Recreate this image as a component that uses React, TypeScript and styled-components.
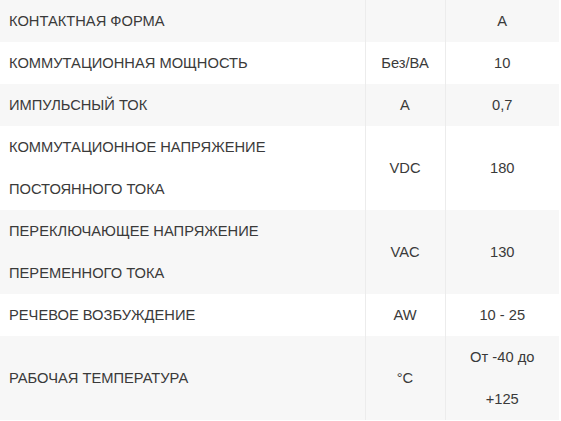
import React from 'react';
import styled, { createGlobalStyle } from 'styled-components';

interface Spec {
  name: string[];
  unit: string;
  value: string[];
}

const specs: Spec[] = [
  { name: ['КОНТАКТНАЯ ФОРМА'], unit: '', value: ['A'] },
  { name: ['КОММУТАЦИОННАЯ МОЩНОСТЬ'], unit: 'Без/ВА', value: ['10'] },
  { name: ['ИМПУЛЬСНЫЙ ТОК'], unit: 'A', value: ['0,7'] },
  { name: ['КОММУТАЦИОННОЕ НАПРЯЖЕНИЕ', 'ПОСТОЯННОГО ТОКА'], unit: 'VDC', value: ['180'] },
  { name: ['ПЕРЕКЛЮЧАЮЩЕЕ НАПРЯЖЕНИЕ', 'ПЕРЕМЕННОГО ТОКА'], unit: 'VAC', value: ['130'] },
  { name: ['РЕЧЕВОЕ ВОЗБУЖДЕНИЕ'], unit: 'AW', value: ['10 - 25'] },
  { name: ['РАБОЧАЯ ТЕМПЕРАТУРА'], unit: '°C', value: ['От -40 до', '+125'] },
];

export default function App() {
  return (
    <>
      <GlobalStyle />
      <TableStyle>
        <colgroup>
          <col style={{ width: 365 }} />
          <col style={{ width: 80 }} />
          <col style={{ width: 114 }} />
        </colgroup>
        <tbody>
        {specs.map((item, i) => (
          <TrStyled key={i} $striped={i % 2 === 0}>
            <NameCell>
              {item.name.map((line, j) => <Line key={j}>{line}</Line>)}
            </NameCell>
            <TdStyled>{item.unit}</TdStyled>
            <TdStyled>
              {item.value.map((line, j) => <Line key={j}>{line}</Line>)}
            </TdStyled>
          </TrStyled>
        ))}
        </tbody>
      </TableStyle>
    </>
  );
}

const GlobalStyle = createGlobalStyle`
    body {
        margin: 0;
        background: #fff;
        font-family: "Liberation Sans", Arial, sans-serif;
    }
`;

const TableStyle = styled.table`
    border-collapse: collapse;
    table-layout: fixed;
    width: 559px;
    font-size: 14.7px;
    color: #3a3a3a;
`;

const TrStyled = styled.tr<{ $striped: boolean }>`
    background-color: ${p => (p.$striped ? '#f7f7f7' : '#fff')};
`;

const TdStyled = styled.td`
    padding: 0 6px;
    border-left: 1px solid #ececec;
    text-align: center;
    vertical-align: middle;
`;

const NameCell = styled.td`
    padding: 0 9px;
    text-align: left;
    vertical-align: middle;
`;

const Line = styled.div`
    line-height: 42px;
`;
